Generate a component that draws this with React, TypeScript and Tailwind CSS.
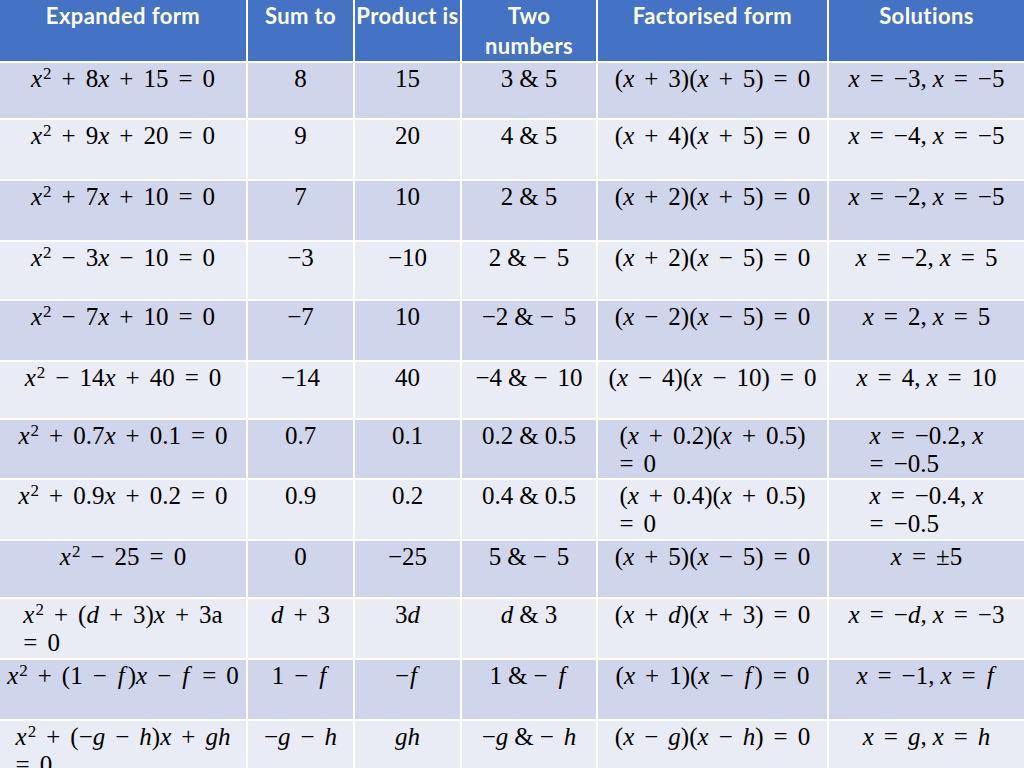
import React from 'react';

const headers = ['Expanded form', 'Sum to', 'Product is', 'Two\nnumbers', 'Factorised form', 'Solutions'];

// ' ' = math space around operators, '_' = plain text space, '\n' = wrapped line
const rows: string[][] = [
  ['x² + 8x + 15 = 0', '8', '15', '3_&_5', '(x + 3)(x + 5) = 0', 'x = −3,_x = −5'],
  ['x² + 9x + 20 = 0', '9', '20', '4_&_5', '(x + 4)(x + 5) = 0', 'x = −4,_x = −5'],
  ['x² + 7x + 10 = 0', '7', '10', '2_&_5', '(x + 2)(x + 5) = 0', 'x = −2,_x = −5'],
  ['x² − 3x − 10 = 0', '−3', '−10', '2_&_− 5', '(x + 2)(x − 5) = 0', 'x = −2,_x = 5'],
  ['x² − 7x + 10 = 0', '−7', '10', '−2_&_− 5', '(x − 2)(x − 5) = 0', 'x = 2,_x = 5'],
  ['x² − 14x + 40 = 0', '−14', '40', '−4_&_− 10', '(x − 4)(x − 10) = 0', 'x = 4,_x = 10'],
  ['x² + 0.7x + 0.1 = 0', '0.7', '0.1', '0.2_&_0.5', '(x + 0.2)(x + 0.5)\n= 0', 'x = −0.2,_x\n= −0.5'],
  ['x² + 0.9x + 0.2 = 0', '0.9', '0.2', '0.4_&_0.5', '(x + 0.4)(x + 0.5)\n= 0', 'x = −0.4,_x\n= −0.5'],
  ['x² − 25 = 0', '0', '−25', '5_&_− 5', '(x + 5)(x − 5) = 0', 'x = ±5'],
  ['x² + (d + 3)x + 3a\n= 0', 'd + 3', '3d', 'd_&_3', '(x + d)(x + 3) = 0', 'x = −d,_x = −3'],
  ['x² + (1 − f)x − f = 0', '1 − f', '−f', '1_&_− f', '(x + 1)(x − f) = 0', 'x = −1,_x = f'],
  ['x² + (−g − h)x + gh\n= 0', '−g − h', 'gh', '−g_&_− h', '(x − g)(x − h) = 0', 'x = g,_x = h'],
];

const rowHeights = ['h-[55px]', 'h-[59px]', 'h-[59px]', 'h-[57px]', 'h-[59px]', 'h-[56px]', 'h-[58px]', 'h-[59px]', 'h-[56px]', 'h-[59px]', 'h-[59px]', 'h-[70px]'];

const cols = 'grid grid-cols-[246px_105px_105px_134px_229px_195px] gap-x-[2px]';

function MathLine({ text }: { text: string }) {
  const out: React.ReactNode[] = [];
  [...text].forEach((ch, i) => {
    if (ch === ' ') out.push(<span key={i} className="inline-block w-[10px]" />);
    else if (ch === '_') out.push(<span key={i} className="inline-block w-[6px]" />);
    else if (ch === '²') out.push(<sup key={i} className="text-[17px] ml-px">2</sup>);
    else if (ch === 'f') out.push(<i key={i} className="ml-px mr-[3px]">f</i>);
    else if ('xdgh'.includes(ch)) out.push(<i key={i}>{ch}</i>);
    else out.push(<span key={i}>{ch}</span>);
  });
  return <span className="block">{out}</span>;
}

function MathCell({ text }: { text: string }) {
  return (
    <span className="inline-block text-left">
      {text.split('\n').map((l, i) => (
        <MathLine key={i} text={l} />
      ))}
    </span>
  );
}

export default function App() {
  return (
    <div className="w-[1024px] h-[768px] overflow-hidden bg-white flex flex-col gap-y-[2px]">
      <div className={`${cols} h-[59px] mb-[2px]`}>
        {headers.map((h, i) => (
          <div
            key={i}
            className="bg-[#4472c4] text-white font-bold text-[22px] tracking-[0.4px] leading-[30px] pt-px text-center whitespace-nowrap font-['Lato',sans-serif]"
          >
            {h.split('\n').map((l, j) => (
              <div key={j}>{l}</div>
            ))}
          </div>
        ))}
      </div>
      {rows.map((r, ri) => (
        <div key={ri} className={`${cols} ${rowHeights[ri]} shrink-0`}>
          {r.map((c, ci) => (
            <div
              key={ci}
              className={`${ri % 2 === 0 ? 'bg-[#cfd5ea]' : 'bg-[#e9ebf5]'} text-black text-center whitespace-nowrap pt-[2px] text-[25px] leading-[28px] font-['Liberation_Serif',serif]`}
            >
              <MathCell text={c} />
            </div>
          ))}
        </div>
      ))}
    </div>
  );
}
